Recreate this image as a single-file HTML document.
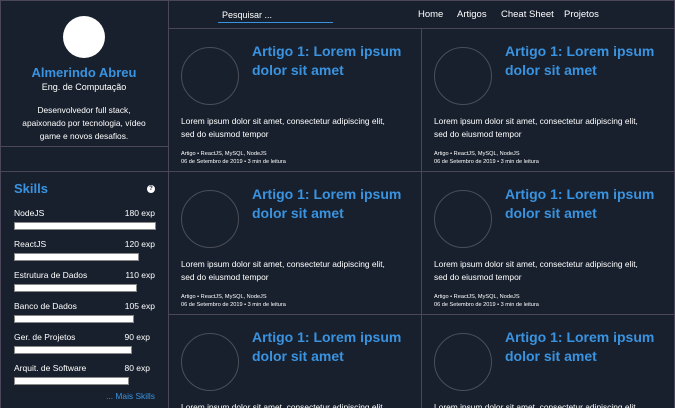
<!DOCTYPE html>
<html style="width:675px;height:408px;overflow:hidden"><head><style>
*{margin:0;padding:0;box-sizing:border-box}
body{width:675px;height:408px;overflow:hidden;background:#18202d;font-family:"Liberation Sans",sans-serif;color:#fff;position:relative}
.a{position:absolute;white-space:nowrap}
.line{position:absolute;background:#4b4659}
.card{position:absolute;width:253px;height:143px;overflow:hidden}
.card .c{position:absolute;left:12px;top:18px;width:58px;height:58px;border:1px solid #4a4e58;border-radius:50%}
.card .t{position:absolute;left:83px;top:13px;font-size:14px;font-weight:bold;line-height:19px;color:#3a93e0;white-space:nowrap}
.card .b{position:absolute;left:12px;top:86px;font-size:8.4px;line-height:13px;white-space:nowrap}
.card .m{position:absolute;left:12px;top:122px;font-size:5.6px;line-height:7.5px;white-space:nowrap}
.sk{position:absolute;left:14px;width:141px;font-size:8.5px}
.sk span{position:absolute;top:0}
.bar{position:absolute;top:14px;left:0;height:8px;background:#fff;border:1px solid #888}
</style></head><body>
<div class="line" style="left:0;top:0;width:675px;height:1px"></div>
<div class="line" style="left:0;top:0;width:1px;height:408px"></div>
<div class="line" style="left:674px;top:0;width:1px;height:408px"></div>
<div class="line" style="left:168px;top:0;width:1px;height:408px"></div>
<div class="line" style="left:168px;top:28px;width:507px;height:1px"></div>
<div class="line" style="left:421px;top:28px;width:1px;height:380px"></div>
<div class="line" style="left:168px;top:171px;width:507px;height:1px"></div>
<div class="line" style="left:168px;top:314px;width:507px;height:1px"></div>
<div class="line" style="left:0;top:146px;width:168px;height:1px"></div>
<div class="line" style="left:0;top:171px;width:168px;height:1px"></div>

<div class="a" style="left:63px;top:16px;width:42px;height:42px;border-radius:50%;background:#fff"></div>
<div class="a" style="left:0;width:168px;text-align:center;top:65px;font-size:13px;font-weight:bold;color:#3a93e0">Almerindo Abreu</div>
<div class="a" style="left:0;width:168px;text-align:center;top:82px;font-size:9px">Eng. de Computação</div>
<div class="a" style="left:0;width:168px;text-align:center;top:104px;font-size:8.4px;line-height:13px;white-space:normal">Desenvolvedor full stack,<br>apaixonado por tecnologia, vídeo<br>game e novos desafios.</div>
<div class="a" style="left:14px;top:181px;font-size:13px;font-weight:bold;color:#3a93e0">Skills</div>
<div class="a" style="left:147px;top:185px;width:8px;height:8px;border-radius:50%;background:#fff;color:#18202d;font-size:6px;font-weight:bold;text-align:center;line-height:8px">?</div>

<div class="sk" style="top:208px"><span style="left:0">NodeJS</span><span style="right:0">180 exp</span><div class="bar" style="width:142px"></div></div>
<div class="sk" style="top:239px"><span style="left:0">ReactJS</span><span style="right:0">120 exp</span><div class="bar" style="width:125px"></div></div>
<div class="sk" style="top:270px"><span style="left:0">Estrutura de Dados</span><span style="right:0">110 exp</span><div class="bar" style="width:123px"></div></div>
<div class="sk" style="top:301px"><span style="left:0">Banco de Dados</span><span style="right:0">105 exp</span><div class="bar" style="width:120px"></div></div>
<div class="sk" style="top:332px"><span style="left:0">Ger. de Projetos</span><span style="right:5px">90 exp</span><div class="bar" style="width:118px"></div></div>
<div class="sk" style="top:363px"><span style="left:0">Arquit. de Software</span><span style="right:5px">80 exp</span><div class="bar" style="width:115px"></div></div>
<div class="a" style="right:520px;top:391px;font-size:8.4px;color:#3a93e0">... Mais Skills</div>

<div class="a" style="left:222px;top:10px;font-size:9px">Pesquisar ...</div>
<div class="a" style="left:218px;top:22px;width:115px;height:1px;background:#3a93e0"></div>
<div class="a" style="left:418px;top:9px;font-size:9.5px">Home</div>
<div class="a" style="left:457px;top:9px;font-size:9.5px">Artigos</div>
<div class="a" style="left:501px;top:9px;font-size:9.5px">Cheat Sheet</div>
<div class="a" style="left:564px;top:9px;font-size:9.5px">Projetos</div>

<div class="card" style="left:169px;top:29px"><div class="c"></div><div class="t">Artigo 1: Lorem ipsum<br>dolor sit amet</div><div class="b">Lorem ipsum dolor sit amet, consectetur adipiscing elit,<br>sed do eiusmod tempor</div><div class="m">Artigo • ReactJS, MySQL, NodeJS<br>06 de Setembro de 2019 • 3 min de leitura</div></div>
<div class="card" style="left:422px;top:29px"><div class="c"></div><div class="t">Artigo 1: Lorem ipsum<br>dolor sit amet</div><div class="b">Lorem ipsum dolor sit amet, consectetur adipiscing elit,<br>sed do eiusmod tempor</div><div class="m">Artigo • ReactJS, MySQL, NodeJS<br>06 de Setembro de 2019 • 3 min de leitura</div></div>
<div class="card" style="left:169px;top:172px"><div class="c"></div><div class="t">Artigo 1: Lorem ipsum<br>dolor sit amet</div><div class="b">Lorem ipsum dolor sit amet, consectetur adipiscing elit,<br>sed do eiusmod tempor</div><div class="m">Artigo • ReactJS, MySQL, NodeJS<br>06 de Setembro de 2019 • 3 min de leitura</div></div>
<div class="card" style="left:422px;top:172px"><div class="c"></div><div class="t">Artigo 1: Lorem ipsum<br>dolor sit amet</div><div class="b">Lorem ipsum dolor sit amet, consectetur adipiscing elit,<br>sed do eiusmod tempor</div><div class="m">Artigo • ReactJS, MySQL, NodeJS<br>06 de Setembro de 2019 • 3 min de leitura</div></div>
<div class="card" style="left:169px;top:315px;height:93px"><div class="c"></div><div class="t">Artigo 1: Lorem ipsum<br>dolor sit amet</div><div class="b">Lorem ipsum dolor sit amet, consectetur adipiscing elit,<br>sed do eiusmod tempor</div></div>
<div class="card" style="left:422px;top:315px;height:93px;width:252px"><div class="c"></div><div class="t">Artigo 1: Lorem ipsum<br>dolor sit amet</div><div class="b">Lorem ipsum dolor sit amet, consectetur adipiscing elit,<br>sed do eiusmod tempor</div></div>
</body></html>
